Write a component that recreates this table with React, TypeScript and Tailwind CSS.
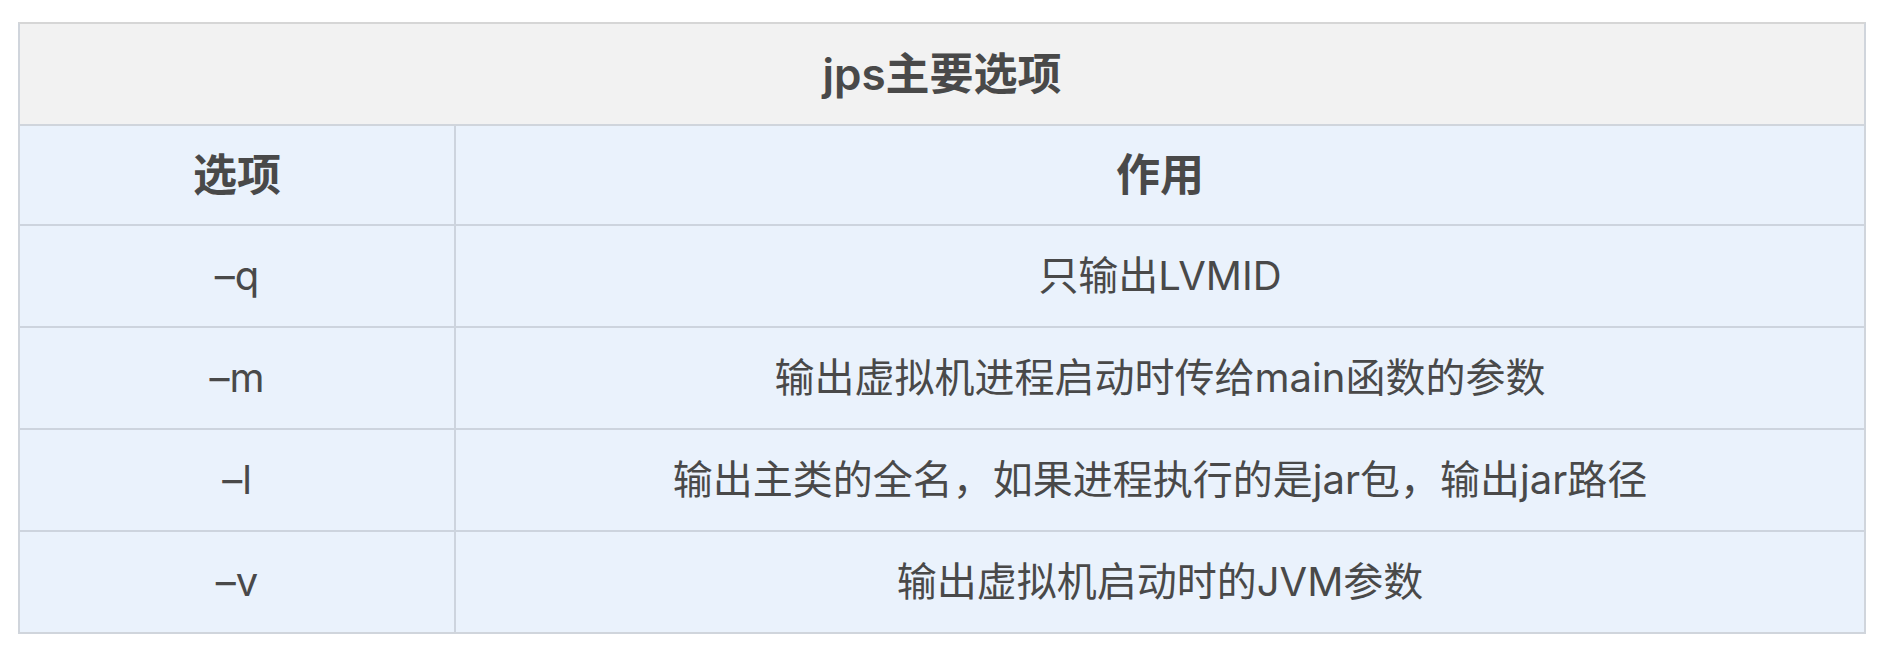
const rows = [
  { opt: '–q', desc: '只输出LVMID' },
  { opt: '–m', desc: '输出虚拟机进程启动时传给main函数的参数' },
  { opt: '–l', desc: '输出主类的全名，如果进程执行的是jar包，输出jar路径' },
  { opt: '–v', desc: '输出虚拟机启动时的JVM参数' },
];

export default function App() {
  return (
    <div
      className="min-h-[656px] bg-white pt-[22px] pl-[18px] text-[#494949]"
      style={{ fontFamily: 'Inter, "Noto Sans CJK SC", sans-serif' }}
    >
      <div className="w-[1848px] border-2 border-[#d0d5dc] border-t-[#d6d6d6]">
        {/* title */}
        <div className="h-[102px] flex items-center justify-center bg-[#f2f2f2] border-b-2 border-[#d0d5dc] text-[44px] font-semibold">
          jps主要选项
        </div>

        {/* header */}
        <div className="grid grid-cols-[436px_1fr] bg-[#eaf2fc] border-b-2 border-[#cdd4de]">
          <div className="h-[98px] flex items-center justify-center border-r-2 border-[#cdd4de] text-[44px] font-bold">
            选项
          </div>
          <div className="h-[98px] flex items-center justify-center text-[44px] font-bold">
            作用
          </div>
        </div>

        {rows.map((r, i) => (
          <div
            key={r.opt}
            className={
              'grid grid-cols-[436px_1fr] bg-[#eaf2fc] ' +
              (i < rows.length - 1 ? 'border-b-2 border-[#cdd4de]' : '')
            }
          >
            <div className="h-[100px] flex items-center justify-center border-r-2 border-[#cdd4de] text-[40px]">
              {r.opt}
            </div>
            <div className="h-[100px] flex items-center justify-center text-[40px]">
              {r.desc}
            </div>
          </div>
        ))}
      </div>
    </div>
  );
}
